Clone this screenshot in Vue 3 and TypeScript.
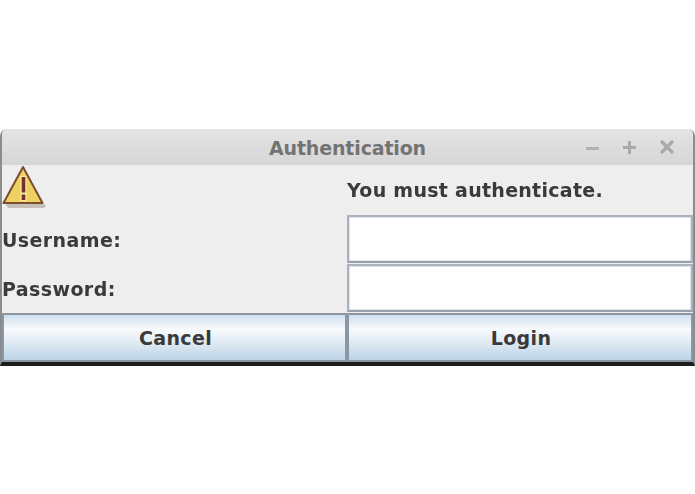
<script setup lang="ts">
const title = 'Authentication'
</script>

<template>
  <div class="page">
    <div class="window">
      <div class="titlebar">
        <span class="title">{{ title }}</span>
        <div class="controls">
          <svg width="16" height="16" viewBox="0 0 16 16"><path d="M1 9.5h13" stroke="#b0b0b0" stroke-width="3" /></svg>
          <svg width="16" height="16" viewBox="0 0 16 16"><path d="M1 8.5h13M7.5 2v13" stroke="#a9a9a9" stroke-width="3" /></svg>
          <svg width="16" height="16" viewBox="0 0 16 16"><path d="M2 2l12 12M14 2L2 14" stroke="#a9a9a9" stroke-width="3.2" /></svg>
        </div>
      </div>
      <div class="form">
        <div class="cell">
          <svg class="warn" width="46" height="44" viewBox="0 0 46 44">
            <path d="M3 38h38l3 3-2 2H6z" fill="#a8a296" opacity="0.6" />
            <path d="M21 2L40.500 38H1.500z" fill="#edd262" stroke="#7c4d2e" stroke-width="2" stroke-linejoin="round" />
            <path d="M18.500 11h6v25h-6z" fill="#f8eba8" />
            <path d="M19.700 12h3.600v15.500h-3.600zM19.700 29.500h3.600v5.500h-3.600z" fill="#75302a" />
          </svg>
        </div>
        <div class="cell message">You must authenticate.</div>
        <div class="cell label">Username:</div>
        <div class="cell"><input class="field" type="text" /></div>
        <div class="cell label">Password:</div>
        <div class="cell"><input class="field" type="password" /></div>
        <button class="btn" type="button">Cancel</button>
        <button class="btn" type="button">Login</button>
      </div>
    </div>
  </div>
</template>

<style scoped>
.page {
  width: 695px;
  height: 494px;
  padding-top: 129px;
  box-sizing: border-box;
  background: #fff;
  overflow: hidden;
}

.window {
  width: 695px;
  height: 237px;
  box-sizing: border-box;
  background: #eeeeee;
  border-left: 2px solid #8c8c8c;
  border-right: 2px solid #8c8c8c;
  border-bottom: 4px solid #1c1c1c;
  border-radius: 7px 7px 0 0;
  font-family: "DejaVu Sans", sans-serif;
  font-weight: 700;
  font-size: 19px;
  letter-spacing: 0.28px;
  color: #3a3a3a;
  filter: blur(0.45px);
}

.titlebar {
  position: relative;
  height: 36px;
  display: flex;
  align-items: center;
  justify-content: center;
  background: linear-gradient(#e4e4e4, #d6d6d6);
  border-radius: 5px 5px 0 0;
}

.title {
  color: #737373;
  margin-top: 2px;
  letter-spacing: -0.15px;
}

.controls {
  position: absolute;
  right: 18px;
  top: 10px;
  display: flex;
  gap: 21px;
}

.form {
  display: grid;
  grid-template-columns: 345px 346px;
  grid-template-rows: 49px 49px 50px 49px;
}

.cell {
  display: flex;
  align-items: center;
}

.label {
  padding-top: 2px;
  letter-spacing: 0.4px;
}

.warn {
  align-self: flex-start;
}

.field {
  width: 100%;
  height: 48px;
  box-sizing: border-box;
  background: #fff;
  border: 2px solid #aab2bd;
  border-bottom-color: #98a2af;
  outline: 1px solid #e0e3e8;
  outline-offset: -3px;
}

.btn {
  height: 49px;
  padding: 0 0 0 2px;
  font: inherit;
  letter-spacing: 0.35px;
  color: #3a3a3a;
  background: linear-gradient(#cfdfee, #f8fbfd 32%, #dfeaf3 62%, #bdd3e7);
  border: 2px solid #8c97a5;
}

.message {
  margin-top: 1px;
}
</style>
